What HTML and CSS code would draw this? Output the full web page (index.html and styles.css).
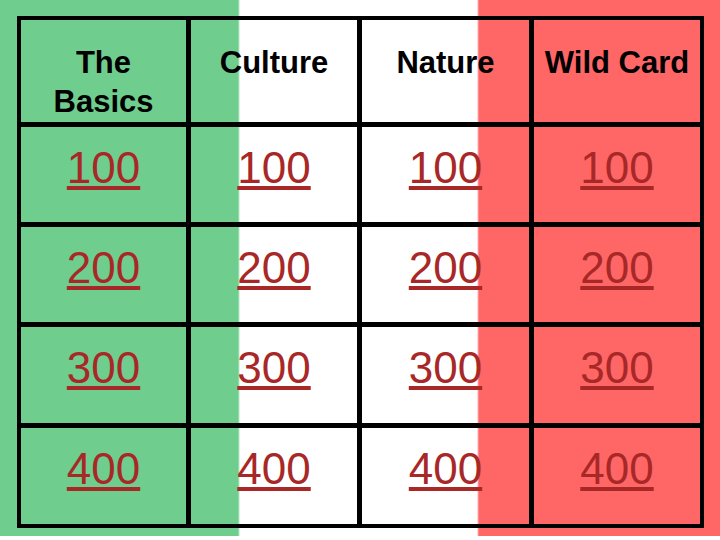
FILE: index.html
```html
<!DOCTYPE html>
<html>
<head>
<meta charset="utf-8">
<link rel="stylesheet" href="styles.css">
</head>
<body>
<div class="slide">
  <div class="board">
    <div class="cell head">The Basics</div>
    <div class="cell head">Culture</div>
    <div class="cell head">Nature</div>
    <div class="cell head">Wild Card</div>

    <div class="cell"><a class="pts" href="#">100</a></div>
    <div class="cell"><a class="pts" href="#">100</a></div>
    <div class="cell"><a class="pts" href="#">100</a></div>
    <div class="cell"><a class="pts" href="#">100</a></div>

    <div class="cell"><a class="pts" href="#">200</a></div>
    <div class="cell"><a class="pts" href="#">200</a></div>
    <div class="cell"><a class="pts" href="#">200</a></div>
    <div class="cell"><a class="pts" href="#">200</a></div>

    <div class="cell"><a class="pts" href="#">300</a></div>
    <div class="cell"><a class="pts" href="#">300</a></div>
    <div class="cell"><a class="pts" href="#">300</a></div>
    <div class="cell"><a class="pts" href="#">300</a></div>

    <div class="cell last"><a class="pts" href="#">400</a></div>
    <div class="cell last"><a class="pts" href="#">400</a></div>
    <div class="cell last"><a class="pts" href="#">400</a></div>
    <div class="cell last"><a class="pts" href="#">400</a></div>
  </div>
</div>
</body>
</html>
```

FILE: styles.css
```css
html, body {
  margin: 0;
  padding: 0;
  background: #ffffff;
}

.slide {
  width: 720px;
  height: 536px;
  padding: 16px 0 0 17px;
  box-sizing: border-box;
  background: linear-gradient(to right,
    #6fcd8e 0px, #6fcd8e 238px,
    #ffffff 240px, #ffffff 477px,
    #ff6666 479px, #ff6666 720px);
  font-family: "Liberation Sans", Arial, sans-serif;
}

.board {
  width: 687px;
  height: 512px;
  box-sizing: border-box;
  border: 4px solid #000;
  display: grid;
  grid-template-columns: 170px 171px 172px 166px;
  grid-template-rows: 107px 100px 100px 101px 96px;
}

.cell {
  box-sizing: border-box;
  border-right: 5px solid #000;
  border-bottom: 5px solid #000;
  text-align: center;
  padding-top: 16px;
}

.cell:nth-child(4n) {
  border-right: none;
}

.cell.last {
  border-bottom: none;
}

.head {
  font-weight: bold;
  font-size: 31px;
  line-height: 39px;
  color: #000;
  padding: 23px 8px 0;
}

.pts {
  font-size: 44px;
  line-height: 50px;
  color: #a82828;
  text-decoration: underline;
}
```
